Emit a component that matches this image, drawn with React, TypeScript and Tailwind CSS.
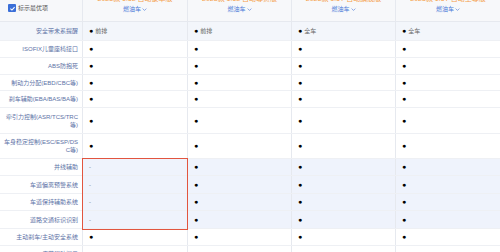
import React from "react";

type Row = {
  label: React.ReactNode;
  h: string;
  vals: string[];
  hl?: "all" | "data";
};

const rows: Row[] = [
  { label: "安全带未系提醒", h: "h-[19px]", vals: ["● 前排", "● 前排", "● 全车", "● 全车"], hl: "all" },
  { label: "ISOFIX儿童座椅接口", h: "h-[17px]", vals: ["●", "●", "●", "●"] },
  { label: "ABS防抱死", h: "h-[17px]", vals: ["●", "●", "●", "●"] },
  { label: "制动力分配(EBD/CBC等)", h: "h-[16px]", vals: ["●", "●", "●", "●"] },
  { label: "刹车辅助(EBA/BAS/BA等)", h: "h-[17px]", vals: ["●", "●", "●", "●"] },
  {
    label: (
      <>
        <span className="block whitespace-nowrap">牵引力控制(ASR/TCS/TRC</span>
        <span className="block whitespace-nowrap">等)</span>
      </>
    ),
    h: "h-[26px]",
    vals: ["●", "●", "●", "●"],
  },
  {
    label: (
      <>
        <span className="block whitespace-nowrap">车身稳定控制(ESC/ESP/DS</span>
        <span className="block whitespace-nowrap">C等)</span>
      </>
    ),
    h: "h-[25px]",
    vals: ["●", "●", "●", "●"],
  },
  { label: "并线辅助", h: "h-[17px]", vals: ["-", "●", "●", "●"], hl: "data" },
  { label: "车道偏离预警系统", h: "h-[18px]", vals: ["-", "●", "●", "●"], hl: "data" },
  { label: "车道保持辅助系统", h: "h-[17px]", vals: ["-", "●", "●", "●"], hl: "data" },
  { label: "道路交通标识识别", h: "h-[18px]", vals: ["-", "●", "●", "●"], hl: "data" },
  { label: "主动刹车/主动安全系统", h: "h-[17px]", vals: ["●", "●", "●", "●"] },
  { label: "疲劳驾驶提示", h: "h-[17px]", vals: ["●", "●", "●", "●"] },
];

const models = [
  "2023款 1.5L 自动豪华版",
  "2023款 1.5L 自动尊贵版",
  "2023款 1.5T 自动旗舰版",
  "2023款 1.5T 自动至尊版",
];

function Val({ v }: { v: string }) {
  if (v === "-") return <span className="text-[#777]">-</span>;
  if (v === "●") return <span className="text-[7px] text-black">●</span>;
  const t = v.replace("● ", "");
  return (
    <span className="flex items-center gap-[2px]">
      <span className="text-[7px] text-black">●</span>
      <span className="text-[#666]">{t}</span>
    </span>
  );
}

export default function App() {
  return (
    <div
      className="relative w-[500px] h-[252px] overflow-hidden bg-white text-[6px] leading-[8px]"
      style={{ fontFamily: '"Liberation Sans","Noto Sans CJK SC",sans-serif' }}
    >
      {/* header */}
      <div className="grid grid-cols-[83px_105px_104px_104px_104px] h-[22px] bg-[#f7f8fa] border-b border-[#e6e9ef]">
        <div className="flex items-start pt-[4px] pl-[8px] gap-[2px] border-r border-[#e6e9ef]">
          <span className="w-[8px] h-[8px] bg-[#3b6fd8] rounded-[1px] flex items-center justify-center">
            <svg viewBox="0 0 10 10" className="w-[7px] h-[7px]">
              <path d="M2 5.2 L4.2 7.3 L8 3" stroke="white" strokeWidth="1.5" fill="none" />
            </svg>
          </span>
          <span className="text-[#555] leading-[8px]">标示最优项</span>
        </div>
        {models.map((m, i) => (
          <div
            key={i}
            className="flex flex-col items-center border-r border-[#e6e9ef] last:border-r-0 overflow-hidden"
          >
            <span className="text-[#f5a04a] text-[7px] leading-[8px] mt-[-5px] whitespace-nowrap">{m}</span>
            <span className="text-[#4a78d8] mt-[2px] flex items-center gap-[1px]">
              燃油车
              <svg viewBox="0 0 8 8" className="w-[5px] h-[5px]">
                <path d="M1 2.5 L4 5.5 L7 2.5" stroke="#4a78d8" strokeWidth="1" fill="none" />
              </svg>
            </span>
          </div>
        ))}
      </div>

      {rows.map((r, i) => (
        <div
          key={i}
          className={`grid grid-cols-[83px_105px_104px_104px_104px] ${r.h} border-b border-[#eef0f4] ${
            r.hl === "all" ? "bg-[#f3f6fb]" : ""
          }`}
        >
          <div className="flex items-center justify-end text-right pr-[4px] text-[#5d72a6] border-r border-[#e6e9ef]">
            <span>{r.label}</span>
          </div>
          {r.vals.map((v, j) => (
            <div
              key={j}
              className={`flex items-center pl-[6px] border-r border-[#e6e9ef] last:border-r-0 ${
                r.hl === "data" ? "bg-[#eff3fc]" : ""
              }`}
            >
              <Val v={v} />
            </div>
          ))}
        </div>
      ))}

      {/* highlight box */}
      <div className="absolute left-[82px] top-[158px] w-[106px] h-[72px] border-[1.5px] border-[#e2553f]" />
    </div>
  );
}
